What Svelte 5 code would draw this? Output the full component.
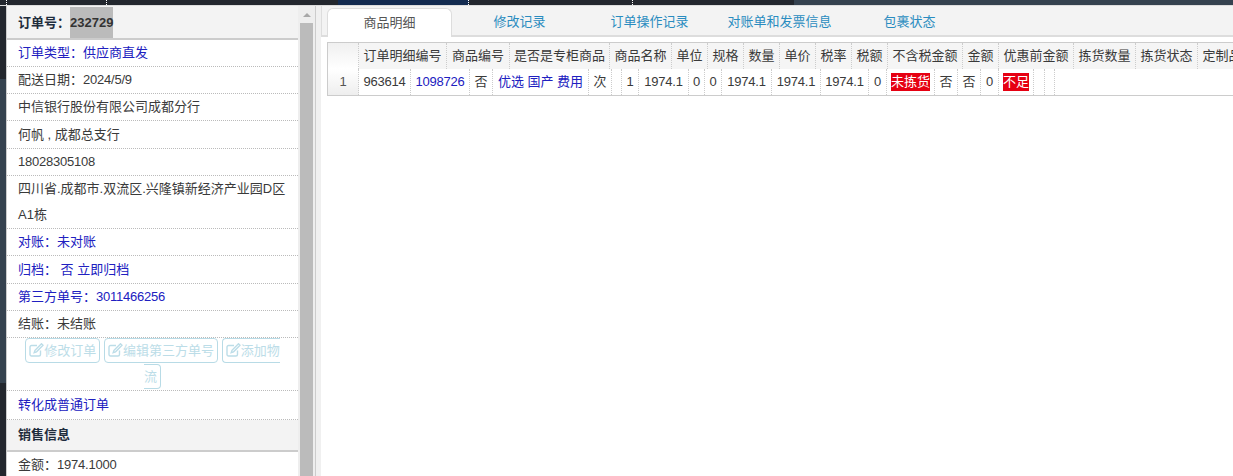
<script>
  const topSegments = [
    { w: 7, tone: 'dark', tick: true },
    { w: 100, tone: 'dark', tick: true },
    { w: 99, tone: 'dark', tick: false },
    { w: 132, tone: 'dark', tick: false },
    { w: 131, tone: 'navy', tick: true },
    { w: 164, tone: 'dark', tick: true },
    { w: 161, tone: 'dark', tick: false }
  ];
  const tabs = ['商品明细', '修改记录', '订单操作记录', '对账单和发票信息', '包裹状态'];
  const headers = [
    ['', 31], ['订单明细编号', 88], ['商品编号', 63], ['是否是专柜商品', 100], ['商品名称', 62],
    ['单位', 36], ['规格', 36], ['数量', 36], ['单价', 36], ['税率', 36], ['税额', 36],
    ['不含税金额', 75], ['金额', 36], ['优惠前金额', 75], ['拣货数量', 62], ['拣货状态', 62], ['定制品名称', 75]
  ];
  const cells = [
    { t: '1', w: 31, k: 'num' }, { t: '963614', w: 52, k: 'd' }, { t: '1098726', w: 59, k: 'blue d' }, { t: '否', w: 23 },
    { t: '优选 国产 费用', w: 96, k: 'blue' }, { t: '次', w: 23 }, { t: '', w: 10 }, { t: '1', w: 17 },
    { t: '1974.1', w: 50, k: 'd' }, { t: '0', w: 16 }, { t: '0', w: 17 }, { t: '1974.1', w: 50, k: 'd' }, { t: '1974.1', w: 49, k: 'd' },
    { t: '1974.1', w: 48, k: 'd' }, { t: '0', w: 18 }, { t: '未拣货', w: 48, k: 'red' }, { t: '否', w: 23 }, { t: '否', w: 23 },
    { t: '0', w: 18 }, { t: '不足', w: 35, k: 'red' }, { t: '', w: 11 }, { t: '', w: 10 }
  ];
</script>

{#snippet editIcon()}
  <svg viewBox="0 0 15 14" width="15" height="14"><path d="M11.5 7.5V11.5a1.5 1.5 0 0 1-1.5 1.5H2.5A1.5 1.5 0 0 1 1 11.5V4a1.5 1.5 0 0 1 1.5-1.5H8M12.5 .8 6 7.3 5.2 9.6l2.3-.8L14 2.3z" fill="none" stroke="currentColor" stroke-width="1.4"/></svg>
{/snippet}

<div class="page">
  <div class="topbar">
    {#each topSegments as s}
      <div class="seg {s.tone}" class:tick={s.tick} style:width="{s.w}px"></div>
    {/each}
    <div class="seg slate grow"></div>
  </div>

  <div class="main">
    <div class="strip">
      <div class="dark-a"></div>
      <div class="slate-a"></div>
      <div class="dark-b"></div>
    </div>

    <div class="panel">
      <div class="section-head first">订单号：<span class="sel">232729</span></div>
      <div class="row blue">订单类型：供应商直发</div>
      <div class="row">配送日期：<span class="d">2024/5/9</span></div>
      <div class="row">中信银行股份有限公司成都分行</div>
      <div class="row tall">何帆 , 成都总支行</div>
      <div class="row"><span class="d">18028305108</span></div>
      <div class="row wrap">四川省.成都市.双流区.兴隆镇新经济产业园D区A1栋</div>
      <div class="row blue">对账：未对账</div>
      <div class="row blue tall">归档： 否 <span>立即归档</span></div>
      <div class="row blue">第三方单号：<span class="d">3011466256</span></div>
      <div class="row">结账：未结账</div>
      <div class="row wrap actions">
        <span class="btn">{@render editIcon()}修改订单</span>
        <span class="btn">{@render editIcon()}编辑第三方单号</span>
        <span class="btn">{@render editIcon()}添加物流</span>
      </div>
      <div class="row blue convert">转化成普通订单</div>
      <div class="section-head">销售信息</div>
      <div class="row"><span>金额：</span><span class="d">1974.1000</span></div>
    </div>

    <div class="scrollbar">
      <div class="arrow"></div>
      <div class="thumb"></div>
    </div>

    <div class="gutter"></div>

    <div class="content">
      <div class="tabs">
        {#each tabs as tab, i}
          <div class="tab" class:active={i === 0}>{tab}</div>
        {/each}
      </div>
      <div class="grid">
        <div class="grid-head">
          {#each headers as [label, w], i}
            <div class="hcell" class:corner={i === 0} style:width="{w}px">{label}</div>
          {/each}
        </div>
        <div class="grid-row">
          {#each cells as c}
            <div class="cell {c.k ?? ''}" style:width="{c.w}px">
              {#if c.k === 'red'}<span class="flag">{c.t}</span>{:else}{c.t}{/if}
            </div>
          {/each}
        </div>
      </div>
    </div>
  </div>
</div>

<style>
  :global(body) {
    margin: 0;
    background: #fff;
  }
  .page {
    width: 1233px;
    height: 476px;
    display: flex;
    flex-direction: column;
    overflow: hidden;
    font-family: "Liberation Sans", "Noto Sans CJK SC", sans-serif;
    font-size: 13px;
    color: #3a3a3a;
  }
  .topbar {
    height: 5px;
    flex: none;
    display: flex;
  }
  .seg { box-sizing: border-box; flex: none; }
  .seg.grow { flex: 1; }
  .dark { background: #23272e; }
  .navy { background: #132b50; }
  .slate { background: #35424f; }
  .tick { border-right: 1px dotted #fff; }

  .main {
    flex: 1;
    min-height: 0;
    display: flex;
    background: #f0f0f0;
    border-top: 1px solid #ddd;
  }
  .strip {
    width: 6px;
    flex: none;
    display: flex;
    flex-direction: column;
    border-right: 1px solid #ccc;
  }
  .dark-a { height: 73px; background: #23272e; }
  .slate-a { height: 304px; background: #35424f; }
  .dark-b { flex: 1; background: #23272e; }

  .panel {
    width: 291px;
    flex: none;
    background: #fff;
    overflow: hidden;
  }
  .section-head {
    height: 30px;
    line-height: 30px;
    padding-left: 11px;
    background: #f3f3f3;
    border-bottom: 2px solid #ccc;
    font-weight: bold;
    color: #1f2d3d;
  }
  .section-head.first {
    height: 31px;
    padding-top: 1px;
    line-height: 31px;
    overflow: hidden;
  }
  .sel {
    display: inline-block;
    height: 31px;
    background: #bbb;
    color: #333;
  }
  .d { letter-spacing: -0.23px; }
  .row {
    height: 26px;
    padding: 0 11px;
    line-height: 26px;
    border-bottom: 1px dotted #bbb;
    white-space: nowrap;
    overflow: hidden;
  }
  .row.wrap {
    height: 52px;
    white-space: normal;
  }
  .row.tall { height: 27px; line-height: 27px; }
  .row.blue { color: #2020c0; }
  .row.actions {
    text-align: center;
    color: #bcdde8;
  }
  .row.convert { height: 28px; line-height: 28px; }
  .btn {
    border: 1px solid #b8dbe6;
    border-radius: 4px;
    padding: 4px 3px;
  }
  .btn svg {
    vertical-align: -2px;
  }

  .scrollbar {
    width: 18px;
    flex: none;
    box-sizing: border-box;
    background: #eee;
    border-right: 1px solid #ccc;
    padding: 0 2px;
    display: flex;
    flex-direction: column;
    align-items: stretch;
  }
  .arrow {
    width: 0;
    height: 0;
    margin: 7px auto 6px;
    border-left: 4px solid transparent;
    border-right: 4px solid transparent;
    border-bottom: 4px solid #a8a8a8;
  }
  .thumb {
    flex: 1;
    width: 13px;
    background: #bbb;
  }
  .gutter {
    width: 5px;
    flex: none;
  }

  .content {
    flex: 1;
    min-width: 0;
    background: #fff;
    overflow: hidden;
  }
  .tabs {
    height: 27px;
    display: flex;
    gap: 5px;
    padding: 2px 0 0 5px;
    background: #f3f3f3;
    border-bottom: 2px solid #ddd;
    border-left: 1px solid #ddd;
    align-items: flex-start;
  }
  .tab {
    width: 125px;
    flex: none;
    height: 27px;
    line-height: 28px;
    text-align: center;
    color: #2a8cc0;
    box-sizing: border-box;
  }
  .tab.active {
    background: #fff;
    color: #555;
    border: 1px solid #ddd;
    border-bottom: none;
    border-radius: 6px 6px 0 0;
    height: 29px;
    line-height: 27px;
  }
  .grid {
    margin: 5px 0 0 6px;
    border-top: 1px solid #ccc;
    border-left: 1px solid #ccc;
  }
  .grid-head, .grid-row {
    display: flex;
    white-space: nowrap;
  }
  .grid-head {
    height: 26px;
    background: #f5f5f5;
  }
  .hcell {
    flex: none;
    box-sizing: border-box;
    line-height: 26px;
    text-align: center;
    border-right: 1px dotted #ccc;
    overflow: hidden;
  }
  .hcell.corner {
    background: linear-gradient(#f0f0f0, #fff);
  }
  .grid-row {
    height: 27px;
    box-sizing: border-box;
    border-bottom: 1px solid #ccc;
  }
  .cell {
    flex: none;
    box-sizing: border-box;
    height: 26px;
    line-height: 25px;
    text-align: center;
    border-right: 1px dotted #ccc;
  }
  .cell.num {
    background: linear-gradient(#fff, #eee);
    color: #555;
  }
  .cell.blue { color: #2020c0; }
  .cell.d { letter-spacing: -0.23px; }
  .flag {
    display: inline-block;
    line-height: 18px;
    background: #e60012;
    color: #fff;
  }
</style>
